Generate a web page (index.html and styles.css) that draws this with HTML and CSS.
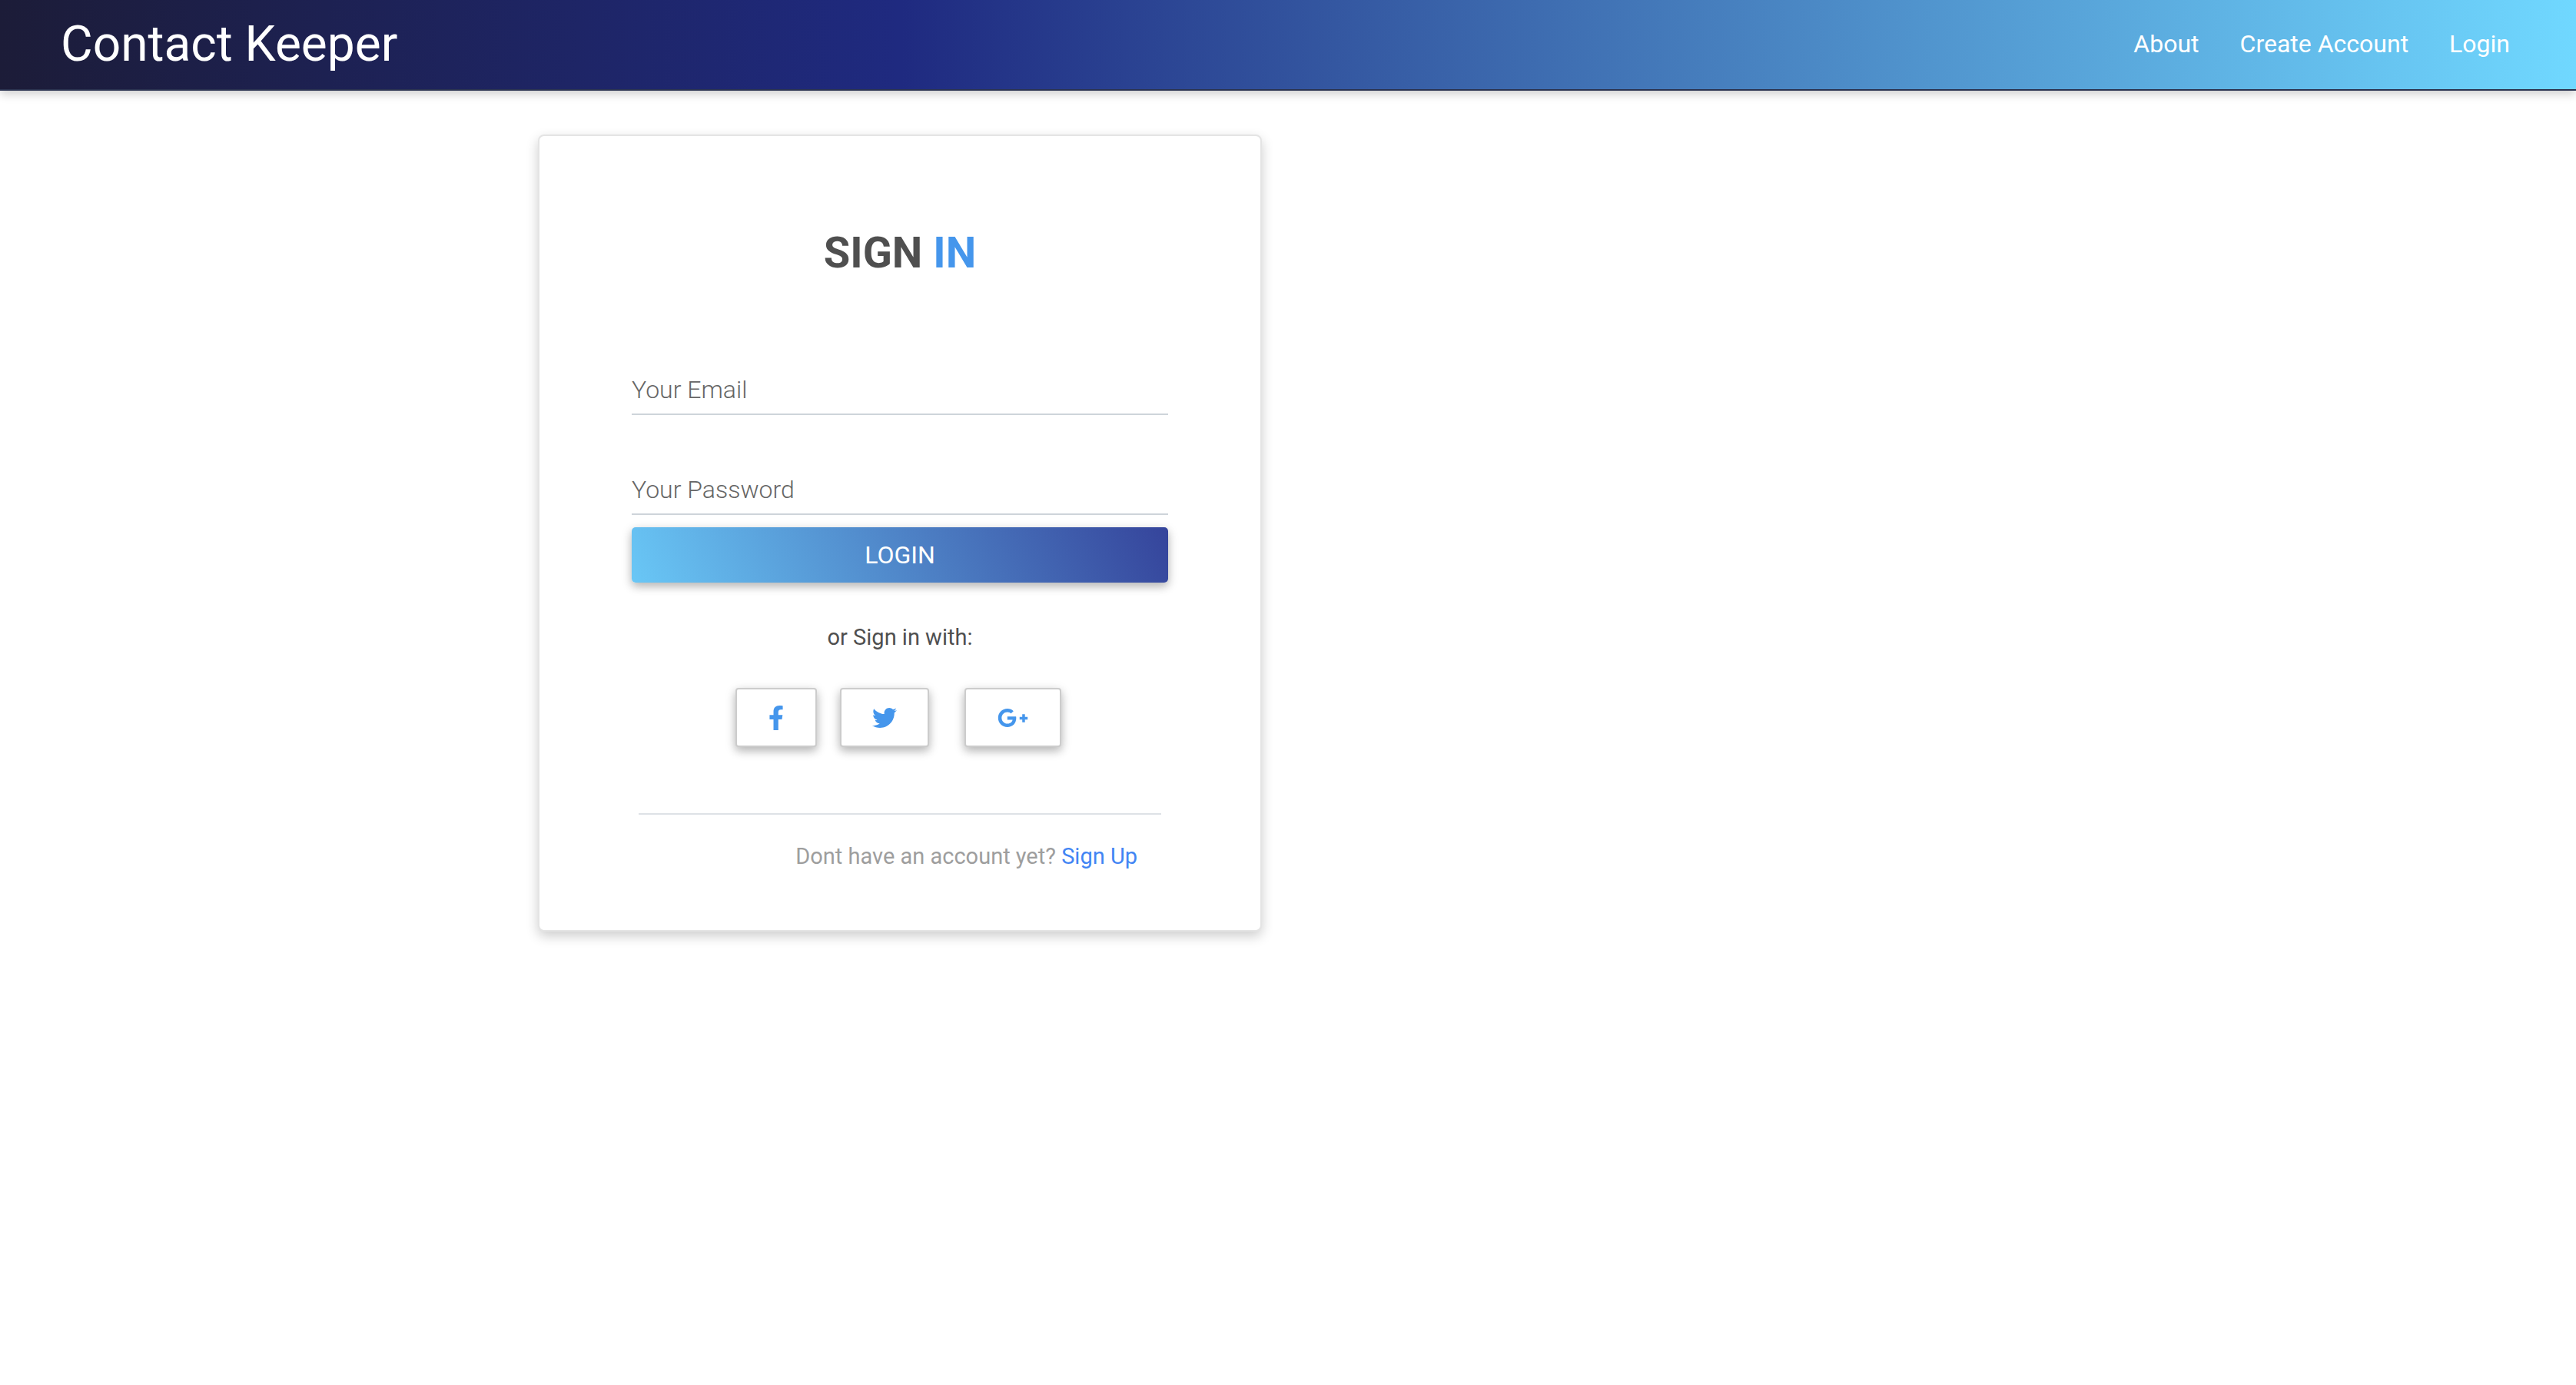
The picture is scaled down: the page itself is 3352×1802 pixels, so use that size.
FILE: index.html
```html
<!DOCTYPE html>
<html lang="en">
<head>
    <meta charset="UTF-8">
    <meta name="viewport" content="width=device-width, initial-scale=1.0">
    <title>Contact Keeper</title>
    <link rel="stylesheet" href="styles.css">
</head>
<body>
    <nav class="navbar">
        <a class="brand" href="#">Contact Keeper</a>
        <div class="nav-links">
            <a href="#">About</a>
            <a href="#">Create Account</a>
            <a href="#">Login</a>
        </div>
    </nav>

    <main class="page">
        <form class="card">
            <h1 class="card-title">SIGN <span class="accent">IN</span></h1>

            <label class="field">
                <span class="field-label">Your Email</span>
                <input type="email">
            </label>
            <label class="field">
                <span class="field-label">Your Password</span>
                <input type="password">
            </label>

            <button class="login-btn" type="button">LOGIN</button>

            <p class="alt-text">or Sign in with:</p>

            <div class="socials">
                <button class="social-btn facebook" type="button" aria-label="Facebook">
                    <svg class="icon-f" viewBox="0 0 320 512"><path d="M279.14 288l14.22-92.66h-88.91v-60.13c0-25.35 12.42-50.06 52.24-50.06h40.42V6.26S260.43 0 225.36 0c-73.22 0-121.08 44.38-121.08 124.72v70.62H22.89V288h81.39v224h100.17V288z"/></svg>
                </button>
                <button class="social-btn twitter" type="button" aria-label="Twitter">
                    <svg class="icon-t" viewBox="0 0 512 512"><path d="M459.37 151.716c.325 4.548.325 9.097.325 13.645 0 138.72-105.583 298.558-298.558 298.558-59.452 0-114.68-17.219-161.137-47.106 8.447.974 16.568 1.299 25.34 1.299 49.055 0 94.213-16.568 130.274-44.832-46.132-.975-84.792-31.188-98.112-72.772 6.498.974 12.995 1.624 19.818 1.624 9.421 0 18.843-1.3 27.614-3.573-48.081-9.747-84.143-51.98-84.143-102.985v-1.299c13.969 7.797 30.214 12.67 47.431 13.319-28.264-18.843-46.781-51.005-46.781-87.391 0-19.492 5.197-37.36 14.294-52.954 51.655 63.675 129.3 105.258 216.365 109.807-1.624-7.797-2.599-15.918-2.599-24.04 0-57.828 46.782-104.934 104.934-104.934 30.213 0 57.502 12.67 76.67 33.137 23.715-4.548 46.456-13.32 66.599-25.34-7.798 24.366-24.366 44.833-46.132 57.827 21.117-2.273 41.584-8.122 60.426-16.243-14.292 20.791-32.161 39.308-52.628 54.253z"/></svg>
                </button>
                <button class="social-btn google" type="button" aria-label="Google Plus">
                    <svg class="icon-g" viewBox="0 0 640 512"><path d="M386.061 228.496c1.834 9.692 3.143 19.384 3.143 31.956C389.204 370.205 315.599 448 204.8 448c-106.084 0-192-85.915-192-192s85.916-192 192-192c51.864 0 95.083 18.859 128.611 50.292l-52.126 50.03c-14.145-13.621-39.028-29.599-76.485-29.599-65.484 0-118.92 54.221-118.92 121.277 0 67.056 53.436 121.277 118.92 121.277 75.961 0 104.513-54.745 108.965-82.773H204.8v-66.009h181.261zm185.406 6.437V179.2h-56.001v55.733h-55.733v56.001h55.733v55.733h56.001v-55.733H627.2v-56.001h-55.733z"/></svg>
                </button>
            </div>

            <hr class="divider">

            <p class="signup-text">Dont have an account yet? <a href="#">Sign Up</a></p>
        </form>
    </main>
</body>
</html>
```

FILE: styles.css
```css
* {
    box-sizing: border-box;
}
body {
    margin: 0;
    background-color: #fff;
    font-family: Roboto, "Liberation Sans", sans-serif;
    min-height: 100vh;
}
a {
    text-decoration: none;
}

/* navbar */
.navbar {
    display: flex;
    justify-content: space-between;
    align-items: center;
    height: 118px;
    padding: 0 86px 2px 79px;
    background: linear-gradient(to right, #1c1c38 0%, #1f2a80 35%, #70d8ff 100%);
    border-bottom: 2px solid #2a3350;
    box-shadow: 0 4px 12px rgba(0, 0, 0, 0.2);
}
.brand {
    color: #fff;
    font-size: 64px;
}
.nav-links {
    display: flex;
    gap: 53px;
}
.nav-links a {
    color: #fff;
    font-size: 32px;
}

/* card */
.page {
    padding: 57px 0 0 700px;
}
.card {
    width: 942px;
    height: 1037px;
    padding: 0 120px;
    border: 2px solid #e4e4e4;
    border-radius: 8px;
    background-color: #fff;
    box-shadow: 0 6px 16px rgba(0, 0, 0, 0.2);
}
.card-title {
    margin: 118px 0 0;
    text-align: center;
    color: #4f4f4f;
    font-size: 56px;
    font-weight: 700;
    line-height: 68px;
}
.accent {
    color: #4596ec;
}

/* inputs */
.field {
    position: relative;
    display: block;
    margin-top: 72px;
}
.card-title + .field {
    margin-top: 119px;
}
.field input {
    display: block;
    width: 100%;
    height: 58px;
    padding: 0;
    border: 0;
    border-bottom: 2px solid #ced4da;
    outline: none;
    background: transparent;
}
.field-label {
    position: absolute;
    left: 0;
    top: 6px;
    color: #666;
    font-size: 32px;
    font-weight: 300;
    line-height: 38px;
}

/* buttons */
.login-btn {
    display: block;
    width: 100%;
    height: 72px;
    margin-top: 16px;
    border: 0;
    border-radius: 5px;
    color: #fff;
    font-family: inherit;
    font-size: 32px;
    background: linear-gradient(65deg, #69c7f6 0%, #35449b 100%);
    box-shadow: 0 5px 11px rgba(0, 0, 0, 0.18), 0 4px 15px rgba(0, 0, 0, 0.15);
}
.alt-text {
    margin: 49px 0 0;
    text-align: center;
    color: #4f4f4f;
    font-size: 29px;
    line-height: 44px;
}
.socials {
    display: flex;
    justify-content: center;
    margin-top: 44px;
    padding-right: 4px;
}
.social-btn {
    display: flex;
    justify-content: center;
    align-items: center;
    height: 77px;
    padding: 0;
    border: 2px solid #ccc;
    border-radius: 4px;
    background-color: #fff;
    box-shadow: 0 5px 11px rgba(0, 0, 0, 0.18), 0 4px 15px rgba(0, 0, 0, 0.15);
}
.social-btn svg {
    display: block;
    fill: #4596ec;
}
.facebook {
    width: 106px;
}
.twitter {
    width: 116px;
    margin-left: 30px;
}
.google {
    width: 126px;
    margin-left: 46px;
}
.icon-f {
    width: 20px;
    height: 32px;
}
.icon-t {
    width: 32px;
    height: 32px;
}
.icon-g {
    width: 40px;
    height: 32px;
}

/* footer of the card */
.divider {
    margin: 86px 9px 0;
    border: 0;
    border-top: 2px solid #dee2e6;
}
.signup-text {
    margin: 34px 40px 0 0;
    text-align: right;
    color: #9e9e9e;
    font-size: 29px;
    line-height: 40px;
}
.signup-text a {
    color: #4285f4;
}
```
